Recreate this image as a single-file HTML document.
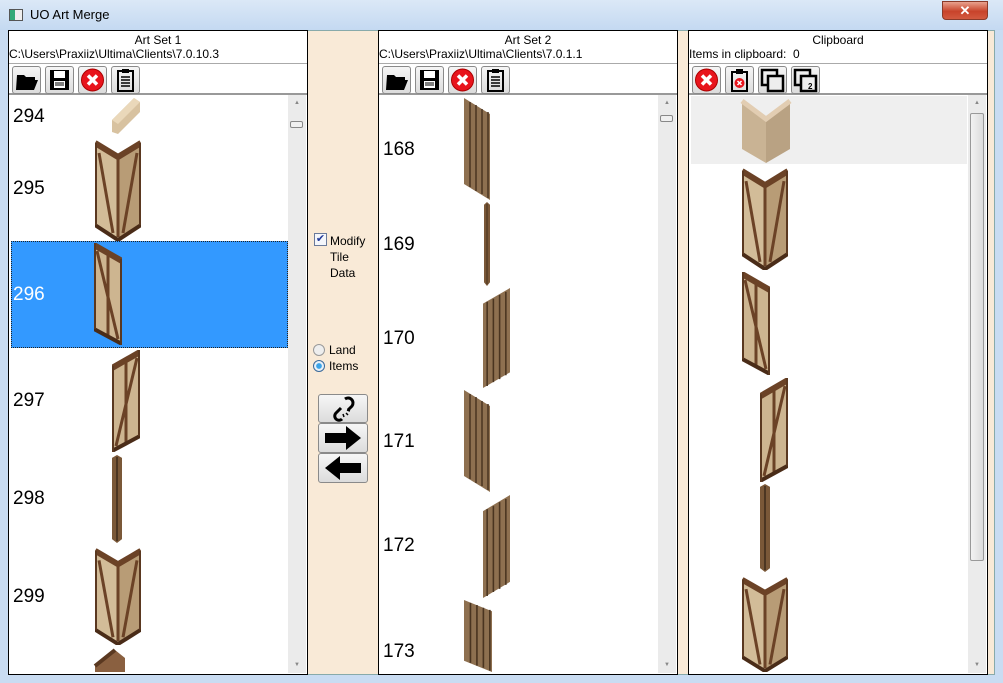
<!DOCTYPE html>
<html><head><meta charset="utf-8"><style>
*{margin:0;padding:0;box-sizing:border-box}
body{width:1003px;height:683px;overflow:hidden;background:#c9dcf2;font-family:"Liberation Sans",sans-serif;position:relative}
.a{position:absolute}
.title{left:30px;top:7px;font-size:13px;color:#000}
.panel{position:absolute;top:30px;width:300px;height:645px;border:1px solid #000;background:#fff}
.hd{position:absolute;left:0;width:100%;text-align:center;font-size:12px;top:2px}
.path{position:absolute;left:0;top:16px;font-size:12px;white-space:nowrap}
.tb{position:absolute;left:0;top:32px;width:100%;height:32px;border-top:1px solid #aaa;border-bottom:2px solid #999}
.btn{position:absolute;top:2px;width:29px;height:28px;border:1px solid #8a8a8a;border-radius:3px;background:linear-gradient(#f6f6f6,#dcdcdc)}
.sb{position:absolute;right:1px;top:64px;width:18px;bottom:1px;background:#ebebeb}
.num{position:absolute;font-size:19px;color:#000}
svg{position:absolute;overflow:visible}
</style></head><body>
<svg width="0" height="0" style="position:absolute">
<defs>
<symbol id="corner" viewBox="0 0 46 104" preserveAspectRatio="none">
<polygon points="0,6 23,20 23,104 0,88" fill="#d2bc98"/>
<polygon points="23,20 46,6 46,88 23,104" fill="#b89c76"/>
<path d="M4,16 L18,96 M42,16 L28,96 M23,22 V100" stroke="#6b4226" stroke-width="3" fill="none"/>
<path d="M0,6 L23,20 L46,6" stroke="#6b4226" stroke-width="6" fill="none"/>
<path d="M0,88 L23,103 L46,88" stroke="#4a2c18" stroke-width="4" fill="none"/>
<path d="M1,6 V88 M45,6 V88" stroke="#5a3820" stroke-width="2"/>
</symbol>
<symbol id="wallD" viewBox="0 0 28 102" preserveAspectRatio="none">
<polygon points="0,0 28,16 28,102 0,86" fill="#cdb590"/>
<path d="M3,8 L24,96 M14,12 V94" stroke="#6b4226" stroke-width="3" fill="none"/>
<path d="M0,2 L28,18" stroke="#6b4226" stroke-width="6"/>
<path d="M0,86 L28,101" stroke="#4a2c18" stroke-width="4"/>
<path d="M1,0 V86 M27,16 V102" stroke="#5a3820" stroke-width="2"/>
</symbol>
<symbol id="wallU" viewBox="0 0 28 102" preserveAspectRatio="none">
<polygon points="0,16 28,0 28,86 0,102" fill="#cdb590"/>
<path d="M25,8 L4,96 M14,12 V94" stroke="#6b4226" stroke-width="3" fill="none"/>
<path d="M0,18 L28,2" stroke="#6b4226" stroke-width="6"/>
<path d="M0,101 L28,86" stroke="#4a2c18" stroke-width="4"/>
<path d="M1,16 V102 M27,0 V86" stroke="#5a3820" stroke-width="2"/>
</symbol>
<symbol id="plankD" viewBox="0 0 26 102" preserveAspectRatio="none">
<polygon points="0,0 26,16 26,102 0,86" fill="#8e7050"/>
<path d="M6,4 V89 M12,7 V93 M18,11 V96 M24,14 V100" stroke="#4a3420" stroke-width="1.5"/>
</symbol>
<symbol id="plankU" viewBox="0 0 26 102" preserveAspectRatio="none">
<polygon points="0,16 26,0 26,86 0,102" fill="#8e7050"/>
<path d="M4,14 V100 M10,11 V96 M16,7 V93 M22,4 V89" stroke="#4a3420" stroke-width="1.5"/>
</symbol>
<symbol id="post" viewBox="0 0 8 90" preserveAspectRatio="none">
<polygon points="0,3 4,0 8,3 8,86 4,90 0,86" fill="#7a5838"/>
<path d="M4,2 V88" stroke="#4a3420" stroke-width="1.5"/>
</symbol>
</defs></svg>

<!-- title bar -->
<div class="a" style="left:0;top:0;width:1003px;height:30px;background:linear-gradient(#dbe8f7,#c4d9f1)"></div>
<div class="a" style="left:9px;top:9px;width:14px;height:12px;border:1px solid #555;background:linear-gradient(90deg,#3a7 0 40%,#eee 40%)"></div>
<div class="a title">UO Art Merge</div>
<div class="a" style="left:942px;top:1px;width:46px;height:19px;border-radius:0 0 4px 4px;background:linear-gradient(#e8a18e,#c8432b 55%,#d25a40);border:1px solid #8a3a2a;color:#fff;font-weight:bold;text-align:center;font-size:13px;line-height:17px">✕</div>

<!-- client bg -->
<div class="a" style="left:8px;top:30px;width:987px;height:645px;background:#f9ead7;border:1px solid #8aa"></div>

<!-- panel 1 -->
<div class="panel" style="left:8px">
<div class="hd">Art Set 1</div>
<div class="path">C:\Users\Praxiiz\Ultima\Clients\7.0.10.3</div>
<div class="tb">
<div class="btn" style="left:3px"><svg width="27" height="26"><path d="M4,8 h7 l2,2 h9 v3 h-14 l-5,10 z M7,13 h18 l-4,10 h-18 z" fill="#000"/></svg></div>
<div class="btn" style="left:36px"><svg width="27" height="26"><rect x="4" y="3" width="19" height="20" fill="#000"/><rect x="8" y="4" width="11" height="7" fill="#fff"/><rect x="8" y="14" width="11" height="7" fill="#fff"/><path d="M9,16h9M9,18h9" stroke="#000"/></svg></div>
<div class="btn" style="left:69px"><svg width="27" height="26"><circle cx="13.5" cy="13" r="11" fill="#e8141c" stroke="#a00" /><path d="M9,8.5 L18,17.5 M18,8.5 L9,17.5" stroke="#fff" stroke-width="3.5"/></svg></div>
<div class="btn" style="left:102px"><svg width="27" height="26"><rect x="6" y="4" width="15" height="20" fill="none" stroke="#000" stroke-width="2"/><rect x="10" y="2" width="7" height="4" fill="#000"/><path d="M9,10h9M9,13h9M9,16h9M9,19h9" stroke="#000" stroke-width="1.5"/></svg></div>
</div>
<div class="sb"><div class="a" style="left:2px;top:26px;width:13px;height:7px;border:1px solid #888;border-radius:2px;background:#f0f0f0"></div><div class="a" style="left:6px;top:5px;font-size:6px;color:#888">▲</div><div class="a" style="left:6px;bottom:5px;font-size:6px;color:#888">▼</div></div>
</div>
<div class="a" style="left:11px;top:241px;width:277px;height:107px;background:#3399ff;border:1px dotted #222"></div>
<div class="num" style="left:13px;top:106px">294</div>
<svg style="left:112px;top:98px" width="28" height="36"><polygon points="0,22 22,0 28,4 28,14 6,36 0,34" fill="#d8c2a0"/><polygon points="0,22 22,0 28,4 6,26" fill="#ead8ba"/></svg>
<div class="num" style="left:13px;top:178px">295</div>
<svg style="left:95px;top:137px" width="46" height="104"><use href="#corner"/></svg>
<div class="num" style="left:13px;top:284px;color:#fff">296</div>
<svg style="left:94px;top:243px" width="28" height="102"><use href="#wallD"/></svg>
<div class="num" style="left:13px;top:390px">297</div>
<svg style="left:112px;top:350px" width="28" height="102"><use href="#wallU"/></svg>
<div class="num" style="left:13px;top:488px">298</div>
<svg style="left:112px;top:455px" width="10" height="88"><use href="#post"/></svg>
<div class="num" style="left:13px;top:586px">299</div>
<svg style="left:95px;top:545px" width="46" height="100"><use href="#corner"/></svg>
<svg style="left:95px;top:650px" width="30" height="22"><polygon points="0,16 20,0 30,8 30,22 0,22" fill="#8a6040"/><path d="M0,16 L20,0" stroke="#5a3820" stroke-width="4"/></svg>

<!-- middle -->
<div class="a" style="left:314px;top:233px;width:13px;height:13px;border:1px solid #6a7a9a;background:#f4f6fb;font-size:11px;line-height:11px;text-align:center;color:#223a9a">✔</div>
<div class="a" style="left:330px;top:233px;font-size:12px;line-height:16px">Modify<br>Tile<br>Data</div>
<div class="a" style="left:313px;top:344px;width:12px;height:12px;border-radius:50%;border:1px solid #999;background:#eee"></div>
<div class="a" style="left:329px;top:343px;font-size:12px">Land</div>
<div class="a" style="left:313px;top:360px;width:12px;height:12px;border-radius:50%;border:1px solid #3b6a9a;background:radial-gradient(#3aa3e8 35%,#e8f0f8 45%)"></div>
<div class="a" style="left:329px;top:359px;font-size:12px">Items</div>
<div class="a btn" style="left:318px;top:394px;width:50px;height:29px"><svg width="48" height="27"><path d="M26,4 a5,5 0 0 1 7,7 l-4,4 M22,13 l-5,5 a4,4 0 0 0 6,6" stroke="#000" stroke-width="3" fill="none"/><path d="M27,18 l2,2 M24,19 l1,3 M28,15 l3,1" stroke="#000" stroke-width="1.5"/></svg></div>
<div class="a btn" style="left:318px;top:423px;width:50px;height:30px"><svg width="48" height="28"><path d="M6,9 h21 v-7 l15,12 l-15,12 v-7 h-21 z" fill="#000"/></svg></div>
<div class="a btn" style="left:318px;top:453px;width:50px;height:30px"><svg width="48" height="28"><path d="M42,9 h-21 v-7 l-15,12 l15,12 v-7 h21 z" fill="#000"/></svg></div>

<!-- panel 2 -->
<div class="panel" style="left:378px">
<div class="hd">Art Set 2</div>
<div class="path">C:\Users\Praxiiz\Ultima\Clients\7.0.1.1</div>
<div class="tb">
<div class="btn" style="left:3px"><svg width="27" height="26"><path d="M4,8 h7 l2,2 h9 v3 h-14 l-5,10 z M7,13 h18 l-4,10 h-18 z" fill="#000"/></svg></div>
<div class="btn" style="left:36px"><svg width="27" height="26"><rect x="4" y="3" width="19" height="20" fill="#000"/><rect x="8" y="4" width="11" height="7" fill="#fff"/><rect x="8" y="14" width="11" height="7" fill="#fff"/><path d="M9,16h9M9,18h9" stroke="#000"/></svg></div>
<div class="btn" style="left:69px"><svg width="27" height="26"><circle cx="13.5" cy="13" r="11" fill="#e8141c" stroke="#a00" /><path d="M9,8.5 L18,17.5 M18,8.5 L9,17.5" stroke="#fff" stroke-width="3.5"/></svg></div>
<div class="btn" style="left:102px"><svg width="27" height="26"><rect x="6" y="4" width="15" height="20" fill="none" stroke="#000" stroke-width="2"/><rect x="10" y="2" width="7" height="4" fill="#000"/><path d="M9,10h9M9,13h9M9,16h9M9,19h9" stroke="#000" stroke-width="1.5"/></svg></div>
</div>
<div class="sb"><div class="a" style="left:2px;top:20px;width:13px;height:7px;border:1px solid #888;border-radius:2px;background:#f0f0f0"></div><div class="a" style="left:6px;top:5px;font-size:6px;color:#888">▲</div><div class="a" style="left:6px;bottom:5px;font-size:6px;color:#888">▼</div></div>
</div>
<div class="num" style="left:383px;top:139px">168</div>
<svg style="left:464px;top:98px" width="26" height="102"><use href="#plankD"/></svg>
<div class="num" style="left:383px;top:234px">169</div>
<svg style="left:484px;top:202px" width="6" height="84"><use href="#post"/></svg>
<div class="num" style="left:383px;top:328px">170</div>
<svg style="left:483px;top:288px" width="27" height="100"><use href="#plankU"/></svg>
<div class="num" style="left:383px;top:431px">171</div>
<svg style="left:464px;top:390px" width="26" height="102"><use href="#plankD"/></svg>
<div class="num" style="left:383px;top:535px">172</div>
<svg style="left:483px;top:495px" width="27" height="103"><use href="#plankU"/></svg>
<div class="num" style="left:383px;top:641px">173</div>
<svg style="left:464px;top:600px" width="28" height="72"><use href="#plankD"/></svg>

<!-- panel 3 -->
<div class="panel" style="left:688px">
<div class="hd">Clipboard</div>
<div class="path">Items in clipboard:&nbsp; 0</div>
<div class="tb">
<div class="btn" style="left:3px"><svg width="27" height="26"><circle cx="13.5" cy="13" r="11" fill="#e8141c" stroke="#a00"/><path d="M9,8.5 L18,17.5 M18,8.5 L9,17.5" stroke="#fff" stroke-width="3.5"/></svg></div>
<div class="btn" style="left:36px"><svg width="27" height="26"><rect x="6" y="5" width="15" height="19" fill="none" stroke="#000" stroke-width="2"/><rect x="10" y="2" width="7" height="5" fill="#000"/><circle cx="13.5" cy="16" r="5" fill="#e8141c"/><path d="M11.5,14l4,4M15.5,14l-4,4" stroke="#fff" stroke-width="1.5"/></svg></div>
<div class="btn" style="left:69px"><svg width="27" height="26"><rect x="3" y="3" width="15" height="15" fill="none" stroke="#000" stroke-width="2.5"/><rect x="9" y="9" width="15" height="15" fill="#eee" stroke="#000" stroke-width="2.5"/></svg></div>
<div class="btn" style="left:102px"><svg width="27" height="26"><rect x="3" y="3" width="15" height="15" fill="none" stroke="#000" stroke-width="2.5"/><rect x="9" y="9" width="15" height="15" fill="#eee" stroke="#000" stroke-width="2.5"/><text x="16" y="22" font-size="8" font-weight="bold" font-family="Liberation Sans">2</text></svg></div>
</div>
<div class="a" style="left:2px;top:65px;width:276px;height:68px;background:#efefef"></div>
<div class="sb"><div class="a" style="left:2px;top:18px;width:14px;height:448px;border:1px solid #999;border-radius:2px;background:linear-gradient(90deg,#f2f2f2,#dcdcdc)"></div><div class="a" style="left:6px;top:5px;font-size:6px;color:#888">▲</div><div class="a" style="left:6px;bottom:5px;font-size:6px;color:#888">▼</div></div>
</div>
<svg style="left:742px;top:97px" width="48" height="66"><polygon points="0,6 24,24 24,66 0,52" fill="#c9b394"/><polygon points="24,24 48,6 48,52 24,66" fill="#b9a283"/><path d="M0,4 L24,22 L48,4" stroke="#e2cdb2" stroke-width="5" fill="none"/></svg>
<svg style="left:742px;top:165px" width="46" height="105"><use href="#corner"/></svg>
<svg style="left:742px;top:272px" width="28" height="103"><use href="#wallD"/></svg>
<svg style="left:760px;top:378px" width="28" height="104"><use href="#wallU"/></svg>
<svg style="left:760px;top:484px" width="10" height="88"><use href="#post"/></svg>
<svg style="left:742px;top:574px" width="46" height="98"><use href="#corner"/></svg>
</body></html>
